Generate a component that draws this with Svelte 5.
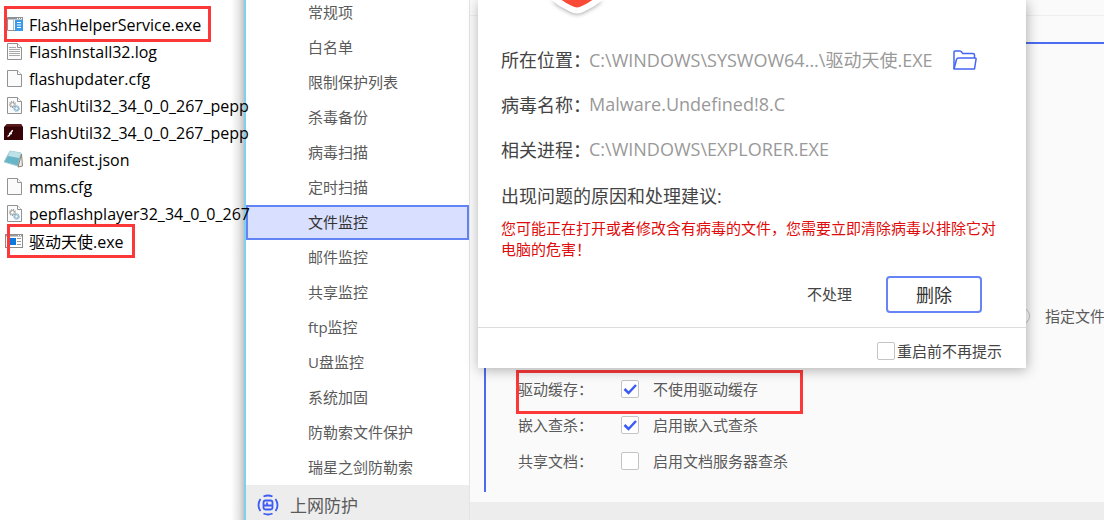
<script>
  const files = [
    { name: 'FlashHelperService.exe', icon: 'helper', mark: 'first' },
    { name: 'FlashInstall32.log', icon: 'log' },
    { name: 'flashupdater.cfg', icon: 'page' },
    { name: 'FlashUtil32_34_0_0_267_pepp', icon: 'gears' },
    { name: 'FlashUtil32_34_0_0_267_pepp', icon: 'flash' },
    { name: 'manifest.json', icon: 'notepad' },
    { name: 'mms.cfg', icon: 'page' },
    { name: 'pepflashplayer32_34_0_0_267', icon: 'gears' },
    { name: '驱动天使.exe', icon: 'app', mark: 'last' }
  ];
  const menu = ['常规项', '白名单', '限制保护列表', '杀毒备份', '病毒扫描', '定时扫描', '文件监控', '邮件监控', '共享监控', 'ftp监控', 'U盘监控', '系统加固', '防勒索文件保护', '瑞星之剑防勒索'];
  const selected = '文件监控';
  const details = [
    { label: '所在位置：', value: 'C:\\WINDOWS\\SYSWOW64...\\驱动天使.EXE', folder: true },
    { label: '病毒名称：', value: 'Malware.Undefined!8.C' },
    { label: '相关进程：', value: 'C:\\WINDOWS\\EXPLORER.EXE' }
  ];
  const options = [
    { label: '驱动缓存：', text: '不使用驱动缓存', on: true, mark: true },
    { label: '嵌入查杀：', text: '启用嵌入式查杀', on: true },
    { label: '共享文档：', text: '启用文档服务器查杀', on: false }
  ];
</script>

<div class="desktop" lang="zh-CN">
  <section class="files">
    <ul>
      {#each files as f}
        <li>
          <svg class="ficon" width="20" height="20" viewBox="0 0 20 20">
            {#if f.icon === 'helper'}
              <path d="M3.500 15.500V2.500h15v13z" fill="#fff" stroke="#8a9298" />
              <path d="M3 3.500h16" stroke="#8a9298" stroke-width="2" />
              <path d="M13 3.500h1m1 0h1m1 0h1" stroke="#fff" />
              <path d="M9.500 5v10" stroke="#b8b8b8" />
              <rect x="11" y="5" width="8" height="11" fill="#3a9bea" />
              <path d="M13 7.500h4m-4 2.500h4m-4 2.500h4" stroke="#fff" />
            {:else if f.icon === 'app'}
              <rect x="1.500" y="3.500" width="17" height="13" fill="#fff" stroke="#8a8a8a" />
              <path d="M2 4.500h16" stroke="#999" stroke-width="2" />
              <path d="M14 4.500h1m1 0h1" stroke="#fff" />
              <rect x="6" y="7" width="6" height="7" fill="#0a78dc" />
              <path d="M13 7.500h4m-4 3h4m-4 3h4" stroke="#999" />
            {:else if f.icon === 'flash'}
              <path d="M0 4 3 1h14l2 3v13H0z" fill="#360306" />
              <path d="M1 3.500 3 1h14l1.500 2.500z" fill="#5c1c1e" />
              <path d="M3.500 13.500c3 0 2.500-5.500 5.500-6M5 10.500h3" stroke="#fff" stroke-width="1.400" fill="none" />
            {:else if f.icon === 'notepad'}
              <path d="M6 1 17 3l-3 13-14-4z" fill="#69b5c8" stroke="#a4cbd2" />
              <path d="m6 1 11 2-2 5L4 6z" fill="#bce2e8" />
              <path d="m14 17 3.500-13 1 12z" fill="#eee" stroke="#8b8373" />
            {:else}
              <path d="M3.500 1.500h10l4 4v12h-14z" fill="#fbfbfb" stroke="#929292" />
              <path d="M13.500 1.500v4h4" fill="#fff" stroke="#929292" />
              {#if f.icon === 'log'}
                <path d="M5 5.500h7m-7 2h11m-11 2h11m-11 2h11m-11 2h11" stroke="#aaa" />
              {:else if f.icon === 'gears'}
                <circle cx="8.500" cy="8.500" r="2.500" fill="none" stroke="#989898" stroke-width="2" stroke-dasharray="1 .7" />
                <circle cx="8.500" cy="8.500" r="1.800" fill="#fff" stroke="#999" stroke-width=".7" />
                <circle cx="12.500" cy="12.500" r="2.300" fill="#fff" stroke="#75a9ca" stroke-width="1.800" stroke-dasharray="1 .6" />
                <circle cx="12.500" cy="12.500" r="1.500" fill="#fff" stroke="#75a9ca" stroke-width=".7" />
              {/if}
            {/if}
          </svg>
          <span>{f.name}</span>
          {#if f.mark}<i class="mark {f.mark}"></i>{/if}
        </li>
      {/each}
    </ul>
  </section>

  <div class="app">
    <nav>
      <ul>
        {#each menu as m}
          <li><a href="#menu" class:selected={m === selected}>{m}</a></li>
        {/each}
      </ul>
      <h2>
        <svg width="22" height="22" viewBox="0 0 22 22" fill="none" stroke="#3c5cf5" stroke-width="1.800">
          <path d="M6.500 2.500Q11 .5 15.500 2.500M6.500 19.500Q11 21.500 15.500 19.500" />
          <path d="M3.500 5Q-.5 11 3.500 17M18.500 5Q22.500 11 18.500 17" />
          <path d="M15.500 11.500V8.500Q15.500 6.500 13.500 6.500H8.500Q6.500 6.500 6.500 8.500V13.500Q6.500 15.500 8.500 15.500H13.500Q15.500 15.500 15.500 13.500V11.500H6.500M10 8.500v3" />
        </svg>
        <span class="t">上网防护</span>
      </h2>
    </nav>

    <main>
      <div class="strip"></div>
      <div class="panel">
        <label class="radio"><input type="radio" name="scope" /><span class="t">指定文件</span></label>
        {#each options as o}
          <div class="option">
            <span class="name t">{o.label}</span>
            <label><input type="checkbox" checked={o.on} /><span class="t">{o.text}</span></label>
            {#if o.mark}<i class="mark cache"></i>{/if}
          </div>
        {/each}
      </div>
      <div class="bottom"></div>

      <div class="dialog" role="dialog" aria-label="病毒名称">
        <svg class="shield" width="80" height="24" viewBox="0 0 80 24">
          <path d="M6-10Q16 4 30 10 36 13.500 40 13.500 44 13.500 50 10 64 4 74-10z" fill="#fff" />
          <path d="M16-8Q24 1 34 5.500 38 7.500 40 7.500 42 7.500 46 5.500 56 1 64-8z" fill="#fa4b38" />
        </svg>
        <dl>
          {#each details as d}
            <div>
              <dt class="t">{d.label}</dt>
              <dd class="t">{d.value}</dd>
              {#if d.folder}
                <button class="folder" aria-label="所在位置">
                  <svg width="26" height="22" viewBox="0 0 26 22" fill="none" stroke="#4465f2" stroke-width="1.500" stroke-linejoin="round">
                    <path d="M2 20V3Q2 2 3 2H8q1 0 2 1.500l.8 1H21q1.500 0 1.500 1.500v3" />
                    <path d="M2 20 4.500 10.500q.5-1.500 2-1.500h16.500q1.500 0 1 1.500L22.500 20z" />
                  </svg>
                </button>
              {/if}
            </div>
          {/each}
        </dl>
        <h3>出现问题的原因和处理建议:</h3>
        <p>您可能正在打开或者修改含有病毒的文件，您需要立即清除病毒以排除它对电脑的危害！</p>
        <div class="actions">
          <button class="skip"><span class="t">不处理</span></button>
          <button class="delete"><span class="t">删除</span></button>
        </div>
        <footer>
          <label><input type="checkbox" /><span class="t">重启前不再提示</span></label>
        </footer>
      </div>
    </main>
  </div>
</div>

<style>
  :global(body) { margin: 0; }
  .desktop {
    display: flex;
    height: 100vh;
    overflow: hidden;
    font: 15px "Open Sans", "Noto Sans CJK SC", sans-serif;
    color: #5a5a5a;
    background: #fff;
    white-space: nowrap;
  }
  ul, dl, dd, h2, h3, p { margin: 0; padding: 0; list-style: none; }
  button { font: inherit; color: inherit; background: none; border: 0; padding: 0; }
  .t { display: block; padding-bottom: 2px; }

  .files {
    position: relative;
    z-index: 1;
    flex: 0 0 244px;
    min-width: 0;
    padding-top: 11px;
    box-sizing: border-box;
    font-size: 16px;
    color: #000;
    background: linear-gradient(to left, #c4c4c4, #e6e6e6 5px, #fff 13px);
  }
  .files li { position: relative; display: flex; align-items: center; gap: 5px; height: 27px; padding-left: 4px; }
  .ficon { flex: none; }

  .mark { position: absolute; box-sizing: border-box; border: 3px solid #fc3838; pointer-events: none; }
  .mark.first { left: 4px; top: -5px; width: 207px; height: 36px; }
  .mark.last { left: 7px; top: -3px; width: 128px; height: 34px; }
  .mark.cache { left: 30px; top: -1px; width: 287px; height: 44px; }

  .app { flex: 1; min-width: 0; display: flex; border-left: 2px solid #7fd0f0; }
  nav { flex: 0 0 224px; box-sizing: border-box; border-right: 1px solid #e4e4e4; background: #fff; }
  nav ul { margin-top: -5px; }
  nav a {
    display: block;
    box-sizing: border-box;
    height: 35px;
    line-height: 33px;
    padding-left: 61px;
    border: 1px solid transparent;
    color: #5a5a5a;
    text-decoration: none;
  }
  nav a.selected { background: #d9dffe; border: 2px solid #6384f3; line-height: 31px; padding-left: 60px; color: #333; }
  nav h2 {
    display: flex;
    align-items: center;
    gap: 11px;
    height: 40px;
    padding-left: 11px;
    background: #ededed;
    font-size: 17px;
    font-weight: 400;
  }

  main { position: relative; flex: 1; min-width: 0; display: flex; flex-direction: column; background: #fafafa; }
  .strip { flex: none; height: 15px; border-bottom: 1px solid #eee; }
  .panel {
    flex: none;
    margin: 26px 0 10px 14px;
    padding: 254px 0 13px;
    border: solid #4b6cf0;
    border-width: 2px 0 0 2px;
    overflow: hidden;
  }
  .radio { display: flex; align-items: center; gap: 15px; height: 36px; margin-bottom: 37px; padding-left: 526px; }
  .option { position: relative; display: flex; align-items: center; height: 36px; padding-left: 32px; }
  .name { width: 103px; }
  .option label { display: flex; align-items: center; gap: 14px; }
  .bottom { flex: 1; background: #ededed; }

  input {
    appearance: none;
    flex: none;
    box-sizing: border-box;
    width: 18px;
    height: 18px;
    margin: 0;
    border: 1px solid #c4c4c4;
    border-radius: 2px;
    background: #fff;
  }
  input[type='radio'] { border-radius: 50%; }
  input:checked {
    background: #fff url("data:image/svg+xml,%3Csvg xmlns='http://www.w3.org/2000/svg' viewBox='0 0 16 16'%3E%3Cpath d='M2.500 8 6.500 12 14 4' fill='none' stroke='%233c5cf5' stroke-width='2.500'/%3E%3C/svg%3E");
  }

  .dialog {
    position: absolute;
    top: 0;
    left: 8px;
    right: 78px;
    background: #fff;
    box-shadow: 1px 2px 12px rgba(0, 0, 0, 0.3);
    color: #444;
  }
  .shield { display: block; margin: 0 0 13px 59px; filter: drop-shadow(0 1px 2px rgba(0, 0, 0, 0.35)); }
  dl { padding-left: 23px; }
  dl div { display: flex; align-items: center; height: 45px; font-size: 18px; }
  dt { flex: none; width: 88px; }
  dd { color: #999; }
  .folder { display: flex; margin-left: 19px; }
  h3 { padding: 3px 0 0 23px; line-height: 43px; font-size: 18px; font-weight: 400; }
  .dialog p { margin: 0 24px 16px 23px; line-height: 21px; white-space: normal; color: #e00b0b; }
  .actions { display: flex; justify-content: flex-end; gap: 34px; margin: 0 44px 14px 23px; }
  .delete { width: 96px; height: 37px; border: 2px solid #6684f5; border-radius: 4px; font-size: 18px; color: #333; }
  footer {
    display: flex;
    justify-content: flex-end;
    align-items: center;
    box-sizing: border-box;
    height: 41px;
    padding: 6px 24px 0 0;
    border-top: 1px solid #ddd;
  }
  footer label { display: flex; align-items: center; gap: 2px; }
</style>
